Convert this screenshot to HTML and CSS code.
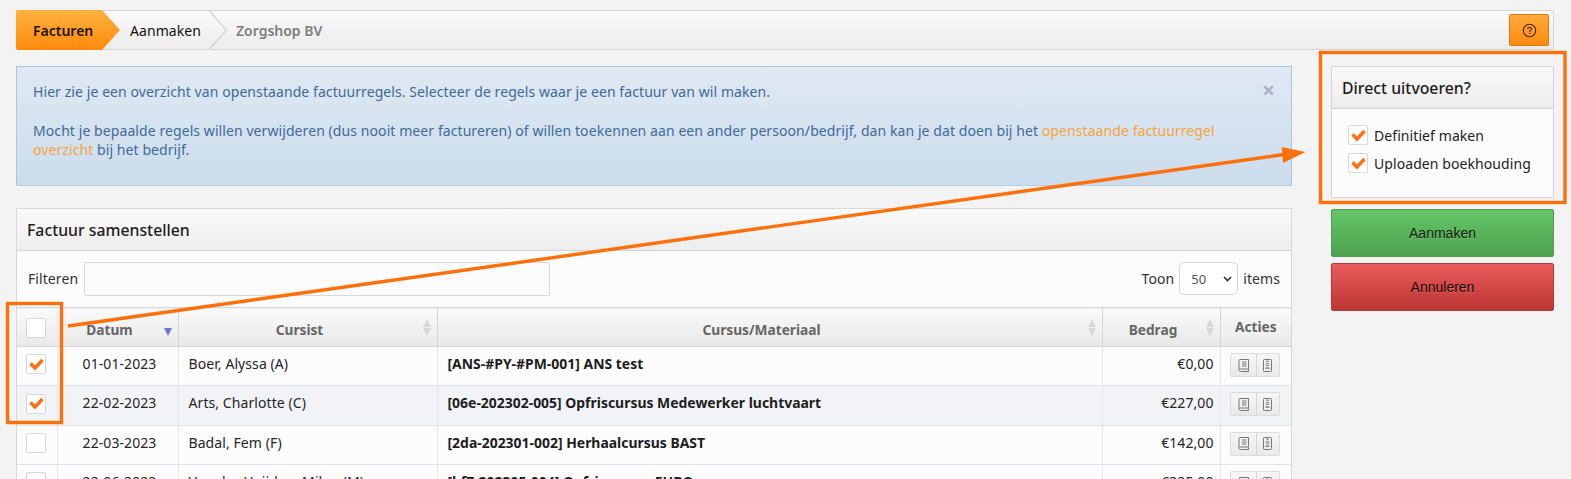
FILE: index.html
```html
<!DOCTYPE html>
<html lang="nl">
<head>
<meta charset="utf-8">
<title>Factuur samenstellen</title>
<link rel="stylesheet" href="styles.css">
</head>
<body>
<div class="page">
  <header class="crumbbar">
    <nav class="crumbs">
      <span class="crumb active">Facturen</span>
      <span class="crumb current">Aanmaken<svg class="chev" width="20" height="40" viewBox="0 0 20 40"><path d="M0.500 0L18.500 20L0.500 40" fill="none" stroke="#d6d6d6" stroke-width="1.500"/></svg></span>
      <span class="crumb muted">Zorgshop BV</span>
    </nav>
    <button class="help" type="button" aria-label="Help">
      <svg width="15" height="15" viewBox="0 0 15 15"><circle cx="7.500" cy="7.500" r="6.200" fill="none" stroke="#3a2404" stroke-width="1.100"/><path d="M5.700 6c0-2.400 3.700-2.400 3.700-.1 0 1.400-1.800 1.400-1.800 2.900" fill="none" stroke="#3a2404" stroke-width="1.100"/><rect x="7" y="9.800" width="1.200" height="1.200" fill="#3a2404"/></svg>
    </button>
  </header>
  <div class="columns">
    <main class="main">
      <section class="alert">
        <span class="close">×</span>
        <p>Hier zie je een overzicht van openstaande factuurregels. Selecteer de regels waar je een factuur van wil maken.</p>
        <p>Mocht je bepaalde regels willen verwijderen (dus nooit meer factureren) of willen toekennen aan een ander persoon/bedrijf, dan kan je dat doen bij het <a href="#">openstaande factuurregel overzicht</a> bij het bedrijf.</p>
      </section>
      <section class="panel">
        <h2 class="panel-title">Factuur samenstellen</h2>
        <div class="toolbar">
          <label class="filter">Filteren <input class="filter-input" type="text"></label>
          <div class="show">Toon
            <span class="select">50<svg width="9" height="6" viewBox="0 0 9 6"><path d="M1 1l3.500 3.500L8 1" fill="none" stroke="#333" stroke-width="1.700"/></svg></span>
            items</div>
        </div>
        <table class="grid">
          <colgroup><col class="c1"><col class="c2"><col class="c3"><col class="c4"><col class="c5"><col class="c6"></colgroup>
          <thead>
            <tr>
              <th class="head-cb"><span class="box"></span></th>
              <th class="sort-desc">Datum</th>
              <th class="sortable">Cursist</th>
              <th class="sortable">Cursus/Materiaal</th>
              <th class="sortable">Bedrag</th>
              <th class="acties">Acties</th>
            </tr>
          </thead>
          <tbody>
            <tr>
              <td class="cb"><span class="box"><svg class="tick" viewBox="0 0 15 13"><path d="M1.500 5.500L6 10L13.500 2" fill="none" stroke="#ff7010" stroke-width="3.500"/></svg></span></td>
              <td class="date">01-01-2023</td><td>Boer, Alyssa (A)</td><td class="course">[ANS-#PY-#PM-001] ANS test</td><td class="amount">€0,00</td>
              <td class="act"><span class="btns"><span><svg class="ic-book" viewBox="0 0 11 13"><path d="M1 10.500V1.500C1 1 1.300 .5 2 .5H10.500V10H2.500C1.500 10 1 10.500 1 11S1.500 12.500 2.500 12.500H10.500V10.500M4 3h4.500M4 5h4.500M4 7h4.500" fill="none" stroke="#777"/></svg></span><span><svg class="ic-card" viewBox="0 0 9 13"><rect x=".5" y=".5" width="8" height="12" rx=".8" fill="none" stroke="#777"/><path d="M3 2.200h3" stroke="#777"/><circle cx="4.500" cy="5.500" r="1.300" fill="none" stroke="#777"/><path d="M2.200 10c0-2.600 4.600-2.600 4.600 0z" fill="#999"/></svg></span></span></td>
            </tr>
            <tr class="alt">
              <td class="cb"><span class="box"><svg class="tick" viewBox="0 0 15 13"><path d="M1.500 5.500L6 10L13.500 2" fill="none" stroke="#ff7010" stroke-width="3.500"/></svg></span></td>
              <td class="date">22-02-2023</td><td>Arts, Charlotte (C)</td><td class="course">[06e-202302-005] Opfriscursus Medewerker luchtvaart</td><td class="amount">€227,00</td>
              <td class="act"><span class="btns"><span><svg class="ic-book" viewBox="0 0 11 13"><path d="M1 10.500V1.500C1 1 1.300 .5 2 .5H10.500V10H2.500C1.500 10 1 10.500 1 11S1.500 12.500 2.500 12.500H10.500V10.500M4 3h4.500M4 5h4.500M4 7h4.500" fill="none" stroke="#777"/></svg></span><span><svg class="ic-card" viewBox="0 0 9 13"><rect x=".5" y=".5" width="8" height="12" rx=".8" fill="none" stroke="#777"/><path d="M3 2.200h3" stroke="#777"/><circle cx="4.500" cy="5.500" r="1.300" fill="none" stroke="#777"/><path d="M2.200 10c0-2.600 4.600-2.600 4.600 0z" fill="#999"/></svg></span></span></td>
            </tr>
            <tr>
              <td class="cb"><span class="box"></span></td>
              <td class="date">22-03-2023</td><td>Badal, Fem (F)</td><td class="course">[2da-202301-002] Herhaalcursus BAST</td><td class="amount">€142,00</td>
              <td class="act"><span class="btns"><span><svg class="ic-book" viewBox="0 0 11 13"><path d="M1 10.500V1.500C1 1 1.300 .5 2 .5H10.500V10H2.500C1.500 10 1 10.500 1 11S1.500 12.500 2.500 12.500H10.500V10.500M4 3h4.500M4 5h4.500M4 7h4.500" fill="none" stroke="#777"/></svg></span><span><svg class="ic-card" viewBox="0 0 9 13"><rect x=".5" y=".5" width="8" height="12" rx=".8" fill="none" stroke="#777"/><path d="M3 2.200h3" stroke="#777"/><circle cx="4.500" cy="5.500" r="1.300" fill="none" stroke="#777"/><path d="M2.200 10c0-2.600 4.600-2.600 4.600 0z" fill="#999"/></svg></span></span></td>
            </tr>
            <tr>
              <td class="cb"><span class="box"></span></td>
              <td class="date">22-06-2023</td><td>Van der Heijden, Milan (M)</td><td class="course">[kf7-202305-004] Opfriscursus EHBO</td><td class="amount">€325,00</td>
              <td class="act"><span class="btns"><span><svg class="ic-book" viewBox="0 0 11 13"><path d="M1 10.500V1.500C1 1 1.300 .5 2 .5H10.500V10H2.500C1.500 10 1 10.500 1 11S1.500 12.500 2.500 12.500H10.500V10.500M4 3h4.500M4 5h4.500M4 7h4.500" fill="none" stroke="#777"/></svg></span><span><svg class="ic-card" viewBox="0 0 9 13"><rect x=".5" y=".5" width="8" height="12" rx=".8" fill="none" stroke="#777"/><path d="M3 2.200h3" stroke="#777"/><circle cx="4.500" cy="5.500" r="1.300" fill="none" stroke="#777"/><path d="M2.200 10c0-2.600 4.600-2.600 4.600 0z" fill="#999"/></svg></span></span></td>
            </tr>
          </tbody>
        </table>
      </section>
    </main>
    <aside class="side">
      <section class="side-panel">
        <h2 class="side-title">Direct uitvoeren?</h2>
        <div class="side-body">
          <div class="check"><span class="box"><svg class="tick" viewBox="0 0 15 13"><path d="M1.500 5.500L6 10L13.500 2" fill="none" stroke="#ff7010" stroke-width="3.500"/></svg></span>Definitief maken</div>
          <div class="check"><span class="box"><svg class="tick" viewBox="0 0 15 13"><path d="M1.500 5.500L6 10L13.500 2" fill="none" stroke="#ff7010" stroke-width="3.500"/></svg></span>Uploaden boekhouding</div>
        </div>
      </section>
      <button class="action green" type="button">Aanmaken</button>
      <button class="action red" type="button">Annuleren</button>
    </aside>
  </div>
  <svg class="annot" width="1571" height="479" viewBox="0 0 1571 479" aria-hidden="true">
    <g fill="none" stroke="#ff6f0a" stroke-width="3.400">
      <rect x="7.500" y="303.500" width="54" height="119"/>
      <rect x="1320.500" y="52.500" width="244.500" height="150"/>
      <path d="M68 326L1284 154.500"/>
    </g>
    <path d="M1281.700 147L1305.500 152L1283 163z" fill="#ff6f0a"/>
  </svg>
</div>
</body>
</html>
```
FILE: styles.css
```css
* { box-sizing: border-box; }
html, body { margin: 0; height: 479px; overflow: hidden; }
body { background: #f3f3f3; font-family: "Noto Sans", sans-serif; font-size: 14px; letter-spacing: .08px; color: #222; }
.page { position: relative; width: 1571px; height: 479px; overflow: hidden; padding: 10px 17px 0 16px; }

.crumbbar { height: 40px; display: flex; justify-content: space-between; align-items: center; background: linear-gradient(#fafafa, #ececec); border: 1px solid #d6d6d6; border-radius: 2px; padding-right: 4px; }
.crumbs { display: flex; height: 40px; }
.crumb { position: relative; display: flex; align-items: center; height: 40px; }
.crumb.active { width: 86px; padding-left: 17px; margin-left: -1px; font-weight: 600; letter-spacing: 0; color: #221405; background: linear-gradient(#ffb240, #ff8a0c); border-radius: 2px 0 0 2px; z-index: 2; }
.crumb.active::after { content: ""; position: absolute; left: 86px; top: 0; width: 18px; height: 40px; background: linear-gradient(#ffb240, #ff8a0c); clip-path: polygon(0 0, 100% 50%, 0 100%); }
.crumb.current { width: 106px; padding-left: 28px; color: #111; z-index: 1; }
.chev { position: absolute; left: 106px; top: 0; }
.crumb.muted { padding-left: 28px; font-weight: 600; letter-spacing: 0; color: #7d7d7d; }
.help { width: 40px; height: 32px; padding: 0; display: flex; align-items: center; justify-content: center; background: linear-gradient(#ffa93a, #ff8b10); border: 1px solid #d97a10; border-radius: 2px; }

.columns { display: flex; margin-top: 16px; align-items: flex-start; }
.main { width: 1276px; }
.side { width: 223px; margin-left: 39px; }

.alert { position: relative; height: 120px; padding: 16px 70px 0 16px; background: linear-gradient(#dfe9f3, #cbdcec); border: 1px solid #a9c6e2; border-bottom-color: #b6cde2; color: #3f6a97; line-height: 18.500px; }
.alert p { margin: 0 0 20.500px; }
.alert a { color: #f6a53c; text-decoration: none; }
.close { position: absolute; right: 16px; top: 9px; font-size: 22px; font-weight: 700; color: #aab4bf; line-height: 26px; }

.panel { margin-top: 22px; background: #fcfcfc; border: 1px solid #d8d8d8; border-bottom: 0; }
.panel-title { margin: 0; height: 42px; padding: 0 10px; display: flex; align-items: center; font-size: 15.800px; font-weight: 500; letter-spacing: 0; color: #1c1c1c; background: linear-gradient(#fafafa, #ededed); border-bottom: 1px solid #d5d5d5; }
.toolbar { height: 56px; display: flex; justify-content: space-between; align-items: center; padding: 0 11px 1px 11px; color: #333; }
.filter { display: flex; align-items: center; gap: 6px; }
.filter-input { width: 466px; height: 34px; background: #fbfbfb; border: 1px solid #d8d8d8; border-radius: 2px; }
.show { display: flex; align-items: center; gap: 5px; }
.select { display: flex; align-items: center; justify-content: space-between; width: 59px; height: 33px; padding: 0 5px 0 11px; font-size: 13px; color: #555; background: #fff; border: 1px solid #d5d5d5; border-radius: 5px; }

.grid { width: 1274px; border-collapse: collapse; table-layout: fixed; font-size: 14px; }
.c1 { width: 40px; } .c2 { width: 121px; } .c3 { width: 259px; } .c4 { width: 665px; } .c5 { width: 118px; } .c6 { width: 71px; }
.grid th { height: 39px; padding: 4px 16px 0 0; font-size: 13.700px; font-weight: 700; letter-spacing: 0; color: #666; text-align: center; background: linear-gradient(#fafafa, #e9e9e9); border: 1px solid #d5d5df; border-width: 1px 1px 1px 0; position: relative; }
.grid th.head-cb { padding: 0 0 0 9px; text-align: left; border-right-color: #e6e6ec; }
.grid th.acties { padding: 0 0 2px; border-right: 0; }
.grid td { height: 39.300px; padding: 0 10px 5px; border-right: 1px solid #e6e6ec; border-bottom: 1px solid #e2e2ea; color: #252525; }
.grid td:last-child { border-right: 0; }
.grid tr.alt td { background: #f2f3f7; }
.sortable::after, .sort-desc::after { content: ""; position: absolute; right: 6px; top: 11px; width: 0; height: 0; border-left: 4.500px solid transparent; border-right: 4.500px solid transparent; }
.sortable::after { border-bottom: 8px solid #d8d8d8; }
.sortable::before { content: ""; position: absolute; right: 6px; top: 20px; width: 0; height: 0; border-left: 4.500px solid transparent; border-right: 4.500px solid transparent; border-top: 8px solid #d8d8d8; }
.sort-desc::after { top: 20px; border-top: 8px solid #7078d8; }
.grid td.cb { padding: 0 0 5px 9px; }
.grid td.date { text-align: center; padding: 0 0 5px 4px; }
.grid td.course { font-weight: 700; font-size: 13.950px; letter-spacing: 0; color: #1d1d1d; }
.grid td.amount { text-align: right; padding-right: 6px; }
.grid td.act { padding: 0 2px 2px 0; text-align: center; }
.btns { display: inline-flex; height: 24px; vertical-align: middle; border: 1px solid #dcdcdc; border-radius: 2px; background: linear-gradient(#f6f6f6, #e9e9e9); }
.btns span { width: 25px; display: flex; align-items: center; justify-content: center; }
.btns span + span { width: 23px; border-left: 1px solid #d6d6d6; }
.ic-book { width: 11px; height: 13px; }
.ic-card { width: 9px; height: 13px; }

.box { display: inline-flex; align-items: center; justify-content: center; width: 20px; height: 20px; background: #fff; border: 1px solid #d8d8d8; border-radius: 2px; vertical-align: middle; flex: none; }
.tick { width: 15px; height: 13px; }

.side-panel { background: #fcfcfc; border: 1px solid #d6d6d6; height: 132px; }
.side-title { margin: 0; height: 42px; padding: 0 10px; display: flex; align-items: center; font-size: 15.800px; font-weight: 500; letter-spacing: 0; color: #1c1c1c; background: linear-gradient(#f9f9f9, #ececec); border-bottom: 1px solid #d0d0d0; }
.side-body { padding: 12px 16px 0; }
.check { display: flex; align-items: center; gap: 6px; height: 28px; color: #222; }
.action { display: block; width: 223px; height: 48px; margin-top: 6px; padding: 0; font-family: "Liberation Sans", sans-serif; font-size: 14px; letter-spacing: 0; color: #13200f; border-radius: 2px; text-shadow: 0 1px 0 rgba(255,255,255,.2); }
.action.green { margin-top: 11px; background: linear-gradient(#64c566, #4ea24f); border: 1px solid #4f9c50; }
.action.red { background: linear-gradient(#ea5c5c, #bb3532); border: 1px solid #b23a38; color: #1d0505; }

.annot { position: absolute; left: 0; top: 0; pointer-events: none; }
```
